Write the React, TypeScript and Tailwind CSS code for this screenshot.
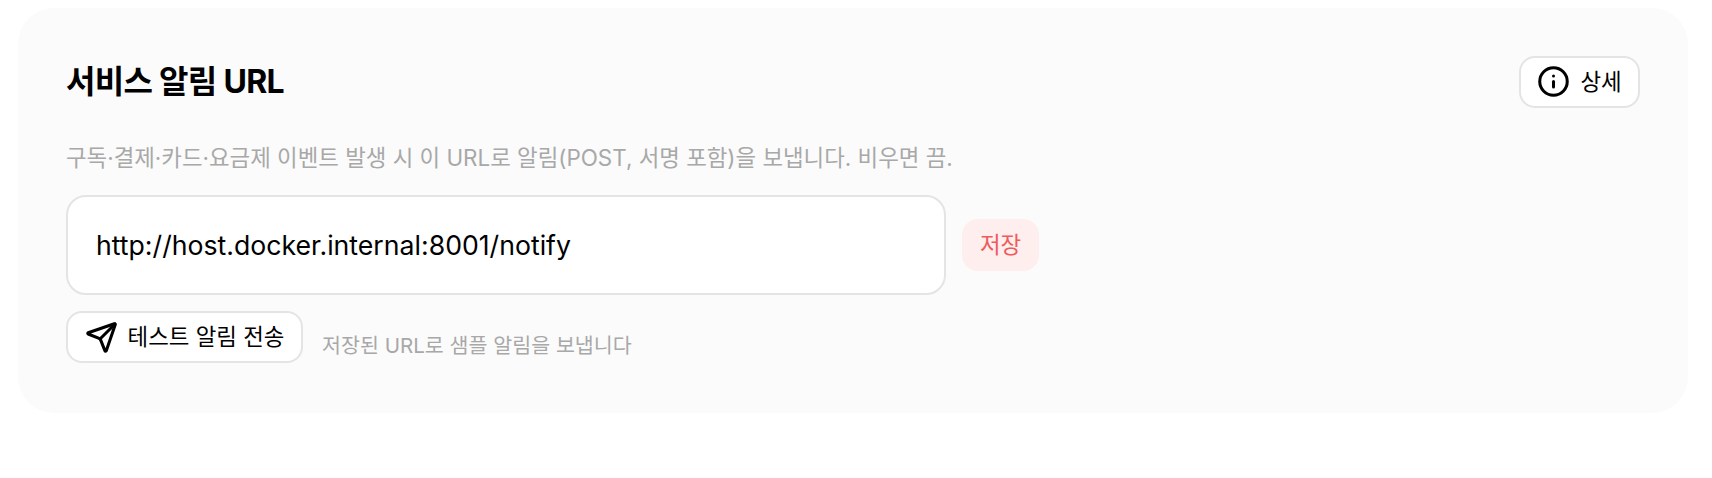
import React from "react";
import { Info, Send } from "lucide-react";

const font = "font-['Inter','Noto_Sans_CJK_KR',sans-serif]";

export default function App() {
  return (
    <div className={`${font} w-[1712px] h-[478px] bg-white pt-2 pl-[18px] pr-6`}>
      <div className="bg-[#fbfbfb] rounded-[36px] h-[405px] px-12 pt-12">
        <div className="flex items-center justify-between h-[51px]">
          <h2 className="text-[32px] font-bold text-black tracking-[-0.7px]">서비스 알림 URL</h2>
          <button className="w-[121px] h-[52px] bg-white border-2 border-[#e4e4e4] rounded-2xl flex items-center justify-center gap-[10px] text-[22.4px] text-black">
            <Info className="w-[33px] h-[33px]" strokeWidth={2.2} />
            <span>상세</span>
          </button>
        </div>
        <p className="mt-[33px] text-[22.4px] leading-[36px] text-[#a8a8a8]">
          구독·결제·카드·요금제 이벤트 발생 시 이 URL로 알림(POST, 서명 포함)을 보냅니다. 비우면 끔.
        </p>
        <div className="mt-[19px] flex items-center gap-4">
          <input
            readOnly
            value="http://host.docker.internal:8001/notify"
            className="w-[880px] h-[100px] bg-white border-2 border-[#e4e4e4] rounded-[20px] px-7 text-[26.67px] text-black outline-none"
          />
          <button className="w-[77px] h-[52px] bg-[#feeeee] rounded-2xl text-[22.4px] text-[#ef5a5a]">저장</button>
        </div>
        <div className="mt-4 flex items-start gap-[19px]">
          <button className="w-[237px] h-[52px] bg-white border-2 border-[#e4e4e4] rounded-2xl flex items-center justify-center gap-[10px] text-[22.4px] text-black">
            <Send className="w-[33px] h-[33px]" strokeWidth={2.2} />
            <span>테스트 알림 전송</span>
          </button>
          <span className="mt-[17px] text-[20.6px] leading-[36px] text-[#a8a8a8]">저장된 URL로 샘플 알림을 보냅니다</span>
        </div>
      </div>
    </div>
  );
}
